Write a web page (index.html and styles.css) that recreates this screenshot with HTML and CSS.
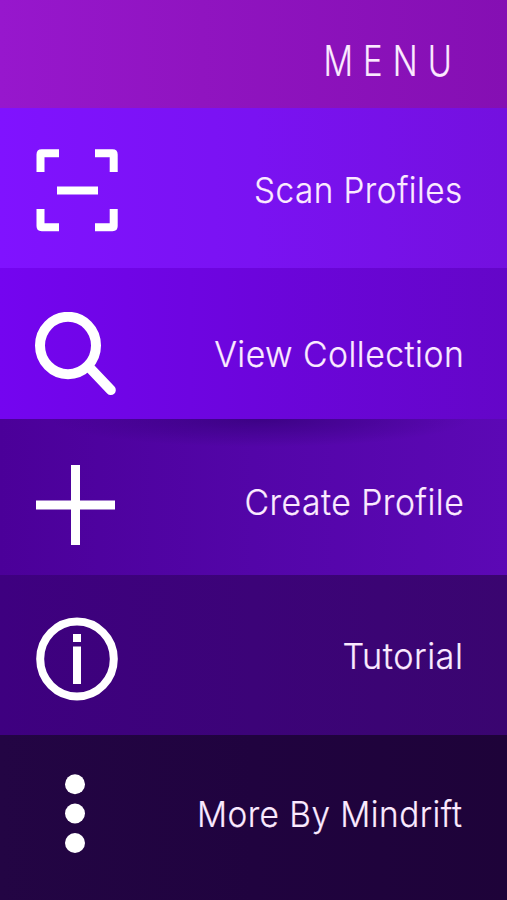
FILE: index.html
```html
<!DOCTYPE html>
<html lang="en">
<head>
    <meta charset="UTF-8">
    <meta name="viewport" content="width=device-width, initial-scale=1.0">
    <link rel="stylesheet" href="styles.css">
    <title>Menu</title>
</head>
<body>
    <header class="menu-header">
        <h1 class="menu-title">MENU</h1>
    </header>
    <nav class="menu">
        <a class="menu-item scan">
            <svg class="icon" viewBox="0 0 84 84">
                <path d="M5.500 24V6.500Q5.500 5.300 6.700 5.300H24M60 5.300H77.500Q78.700 5.300 78.700 6.500V24M5.500 61V78Q5.500 79.200 6.700 79.200H24M60 79.200H77.500Q78.700 79.200 78.700 78V61M22 42.500H63" />
            </svg>
            <span class="label">Scan Profiles</span>
        </a>
        <a class="menu-item view">
            <svg class="icon" viewBox="0 0 84 84">
                <ellipse class="lens" cx="33" cy="33.500" rx="28" ry="28.700" />
                <path class="handle" d="M53.500 54.500L75.800 78" />
            </svg>
            <span class="label">View Collection</span>
        </a>
        <a class="menu-item create">
            <svg class="icon" viewBox="0 0 84 84">
                <path class="plus" d="M1 43H80M40.500 3V83" />
            </svg>
            <span class="label">Create Profile</span>
        </a>
        <a class="menu-item tutorial">
            <svg class="icon" viewBox="0 0 84 84">
                <ellipse cx="42" cy="42" rx="36.800" ry="37.400" />
                <path d="M42 17V25M42 29.500V67" />
            </svg>
            <span class="label">Tutorial</span>
        </a>
        <a class="menu-item more">
            <svg class="icon" viewBox="0 0 84 84">
                <circle class="dot" cx="40" cy="12.200" r="10" />
                <circle class="dot" cx="40" cy="41.500" r="10" />
                <circle class="dot" cx="40" cy="71" r="10" />
            </svg>
            <span class="label">More By Mindrift</span>
        </a>
    </nav>
</body>
</html>
```
FILE: styles.css
```css
* {
    box-sizing: border-box;
}
body {
    margin: 0;
    height: 900px;
    overflow: hidden;
    font-family: Inter, "Liberation Sans", sans-serif;
    font-weight: 300;
    color: #fbeaff;
    background-color: #20043d;
    -webkit-text-stroke: 0.2px #fbeaff;
}
.menu-header {
    height: 108px;
    padding: 35px 55px 0 0;
    background: linear-gradient(to right, #9717cd, #9014c0 40%, #850fb3);
}
.menu-title {
    margin: 0;
    font-size: 42px;
    line-height: 51px;
    font-weight: 300;
    letter-spacing: 13px;
    margin-right: -10px;
    text-align: right;
    transform: scaleX(0.78);
    transform-origin: right;
}
.menu-item {
    display: flex;
    justify-content: space-between;
    padding: 0 43px 0 35px;
}
.icon {
    width: 84px;
    height: 84px;
    fill: none;
    stroke: #fff;
    stroke-width: 8px;
}
.label {
    font-size: 35.500px;
    line-height: 44px;
    white-space: nowrap;
    letter-spacing: 0.500px;
    transform: scaleX(0.95);
    transform-origin: right;
}
.scan {
    height: 160px;
    padding-top: 40px;
    background: linear-gradient(to right, #8012ff, #7a12f2 50%, #7410df);
}
.scan .label {
    margin-top: 21px;
    margin-right: 1px;
    transform: scaleX(0.937);
}
.view {
    height: 151px;
    padding-top: 44px;
    background: linear-gradient(to right, #7405f0, #6c05dc 50%, #6406c8);
}
.view .label {
    margin-top: 21px;
}
.lens {
    stroke-width: 10px;
}
.handle {
    stroke-width: 10px;
    stroke-linecap: round;
}
.create {
    height: 156px;
    padding-top: 43px;
    background:
        radial-gradient(ellipse 210px 28px at 260px 0, rgba(45, 0, 110, 0.6), rgba(45, 0, 110, 0)),
        linear-gradient(to right, #4b0099, #5305a8 50%, #5c08b5);
}
.create .label {
    margin-top: 19px;
}
.plus {
    stroke-width: 9px;
}
.tutorial {
    height: 160px;
    padding-top: 42px;
    background: linear-gradient(to right, #3e0080, #3c0378 50%, #3a0570);
}
.tutorial .label {
    margin-top: 18px;
    margin-right: 1px;
    transform: scaleX(0.965);
}
.more {
    height: 165px;
    padding-top: 37px;
    background: linear-gradient(to right, #230544, #20033f 50%, #1e0339);
}
.more .label {
    margin-top: 21px;
    margin-right: 2px;
    transform: scaleX(0.94);
}
.dot {
    fill: #fff;
    stroke: none;
}
```
